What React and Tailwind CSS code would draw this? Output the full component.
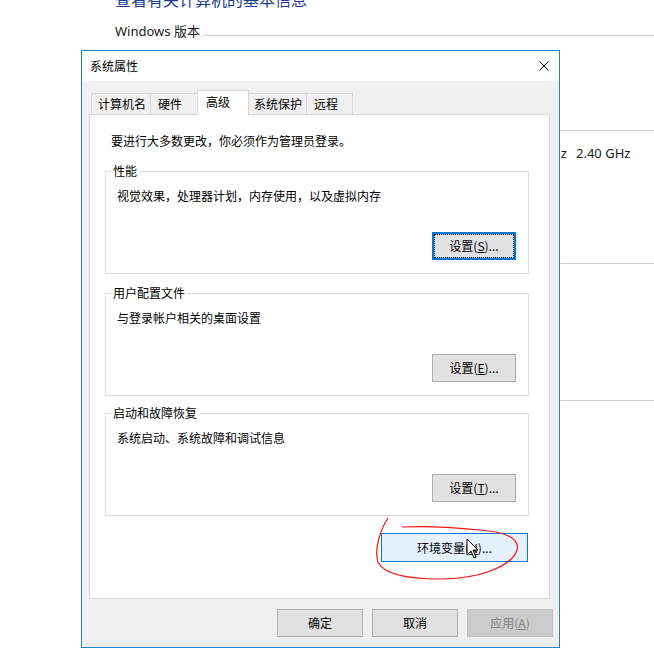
import React from "react";

function Tab({ label, width, pad, selected, first }) {
  const base = "border border-b-0 border-[#d9d9d9] text-[12px] leading-[20px] text-black whitespace-nowrap";
  if (selected) {
    return (
      <div
        className={`${base} relative z-10 -ml-px -mb-px h-[25px] bg-white`}
        style={{ width, paddingLeft: pad }}
      >
        <div className="pt-[1px]">{label}</div>
      </div>
    );
  }
  return (
    <div
      className={`${base} h-[21px] bg-[#f0f0f0] ${first ? "" : "-ml-px"}`}
      style={{ width, paddingLeft: pad }}
    >
      {label}
    </div>
  );
}

function Btn({ children, width = 84, height = 28, variant = "normal" }) {
  const styles = {
    normal: "border border-[#adadad] bg-[#e1e1e1] text-black",
    default:
      "border-2 border-[#0078d7] bg-[#e1e1e1] text-black outline-1 outline-dotted outline-black outline-offset-[-3px]",
    hover: "border border-[#0078d7] bg-[#e5f1fb] text-black",
    disabled: "border border-[#bfbfbf] bg-[#cccccc] text-[#838383]",
  };
  return (
    <div
      className={`flex items-center justify-center text-[12px] leading-[16px] ${styles[variant]}`}
      style={{ width, height }}
    >
      {children}
    </div>
  );
}

function Group({ title, desc, button, className = "" }) {
  return (
    <div className={`relative ml-[15px] flex h-[103px] w-[424px] flex-col border border-[#dcdcdc] pl-[11px] pr-[12px] pt-[16px] ${className}`}>
      <div className="absolute left-[5px] top-[-9px] bg-white px-[2px] text-[12px] leading-[16px] text-black">
        {title}
      </div>
      <div className="text-[12px] leading-[16px] text-black">{desc}</div>
      <div className="mt-[28px] self-end">{button}</div>
    </div>
  );
}

export default function App() {
  return (
    <div className="relative h-[651px] w-[654px] overflow-hidden bg-white font-['Noto_Sans_CJK_SC','Noto_Sans',sans-serif]">
      {/* control panel page behind the dialog */}
      <div className="pl-[115px] font-['Noto_Sans','Noto_Sans_CJK_SC',sans-serif]">
        <div className="-mt-[11px] h-[20px] whitespace-nowrap text-[16px] leading-[20px] text-[#1e3d8f] font-['Noto_Sans_CJK_SC',sans-serif]">
          查看有关计算机的基本信息
        </div>
        <div className="mt-[12px] flex h-[20px] items-start">
          <span className="whitespace-nowrap text-[13px] leading-[20px] text-[#1a1a1a]">Windows 版本</span>
          <div className="ml-[3px] mt-[14px] h-px flex-1 bg-[#cccccc]" />
        </div>
        <div className="mt-[89px] h-px bg-[#cccccc]" />
        <div className="mt-[12px] flex h-[20px] text-[13px] leading-[20px] text-[#1a1a1a]">
          <span className="w-[452px] overflow-hidden whitespace-nowrap text-right">Intel(R) Xeon(R) CPU E5-2680 v4 @ 2.40GHz</span>
          <span className="ml-[9px] whitespace-nowrap">2.40 GHz</span>
        </div>
        <div className="mt-[100px] h-px bg-[#cccccc]" />
        <div className="mt-[136px] h-px bg-[#cccccc]" />
      </div>

      {/* 系统属性 dialog window */}
      <div className="absolute left-[81px] top-[50px] z-10 flex h-[598px] w-[479px] flex-col border border-[#1883d7] bg-[#f0f0f0]">
        <div className="flex h-[30px] items-center justify-between bg-white pl-[8px] pr-[10px]">
          <span className="text-[12px] leading-[16px] text-black">系统属性</span>
          <svg width="10" height="10" viewBox="0 0 10 10" className="block">
            <path d="M0.5 0.5 L9.5 9.5 M9.5 0.5 L0.5 9.5" stroke="#000" strokeWidth="1" fill="none" />
          </svg>
        </div>

        <div className="flex flex-1 flex-col pl-[7px] pr-[9px] pt-[9px]">
          <div className="flex h-[24px] items-end pl-[2px]">
            <Tab label="计算机名" width={60} pad={6} first />
            <Tab label="硬件" width={48} pad={7} />
            <Tab label="高级" width={52} pad={8} selected />
            <Tab label="系统保护" width={59} pad={5} />
            <Tab label="远程" width={47} pad={7} />
          </div>

          <div className="flex h-[485px] flex-col border border-[#d9d9d9] bg-white">
            <div className="mt-[18px] pl-[21px] text-[12px] leading-[16px] text-black">
              要进行大多数更改，你必须作为管理员登录。
            </div>

            <Group
              className="mt-[22px]"
              title="性能"
              desc="视觉效果，处理器计划，内存使用，以及虚拟内存"
              button={
                <Btn variant="default">
                  设置(<span className="underline">S</span>)...
                </Btn>
              }
            />
            <Group
              className="mt-[19px]"
              title="用户配置文件"
              desc="与登录帐户相关的桌面设置"
              button={
                <Btn>
                  设置(<span className="underline">E</span>)...
                </Btn>
              }
            />
            <Group
              className="mt-[17px]"
              title="启动和故障恢复"
              desc="系统启动、系统故障和调试信息"
              button={
                <Btn>
                  设置(<span className="underline">T</span>)...
                </Btn>
              }
            />

            <div className="mr-[21px] mt-[17px] self-end">
              <Btn variant="hover" width={147} height={29}>
                环境变量(<span className="underline">N</span>)...
              </Btn>
            </div>
          </div>

          <div className="-mr-[3px] mt-[10px] flex justify-end gap-[9px]">
            <Btn width={86}>确定</Btn>
            <Btn width={86}>取消</Btn>
            <Btn width={86} variant="disabled">
              应用(<span className="underline">A</span>)
            </Btn>
          </div>
        </div>
      </div>

      {/* hand-drawn red circle around the environment variables button */}
      <svg className="pointer-events-none absolute left-0 top-0 z-20" width="654" height="651">
        <path
          d="M388 518 C380 530, 374 550, 378 562 C384 575, 410 579, 440 579 C480 579, 512 566, 517 550 C520 538, 505 532, 480 530 C450 527, 420 526, 402 527"
          stroke="#ff1010"
          strokeWidth="1.2"
          fill="none"
        />
      </svg>

      {/* mouse pointer */}
      <svg className="pointer-events-none absolute left-[466px] top-[538px] z-30" width="14" height="22" viewBox="0 0 14 22">
        <path
          d="M1 1 L1 17 L5 13 L8 20 L10 19 L7 12 L12 12 Z"
          fill="#fff"
          stroke="#000"
          strokeWidth="1"
          strokeLinejoin="miter"
        />
      </svg>
    </div>
  );
}
